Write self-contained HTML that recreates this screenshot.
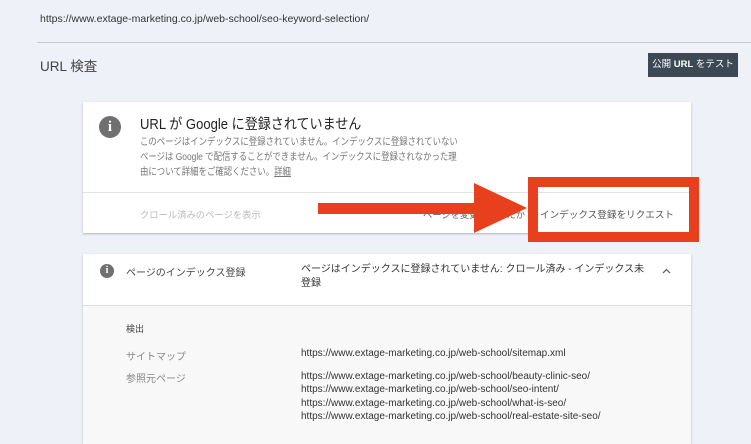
<!DOCTYPE html>
<html><head><meta charset="utf-8"><style>
*{margin:0;padding:0;box-sizing:border-box}
body{width:751px;height:430px;overflow:hidden;background:#eef1f8;font-family:"Liberation Sans","Noto Sans CJK JP",sans-serif;position:relative;color:#333}
.a{position:absolute;white-space:nowrap}
.card{position:absolute;background:#fff;box-shadow:0 1px 2px rgba(0,0,0,.25)}
.ic{position:absolute;border-radius:50%;background:#707070;color:#fff;font-weight:bold;text-align:center;font-family:"Liberation Serif",serif}
.sx{transform-origin:0 0}
</style></head><body>
<div class="a" style="left:40px;top:13px;font-size:10.5px;color:#333">https://www.extage-marketing.co.jp/web-school/seo-keyword-selection/</div>
<div class="a" style="left:37px;top:42px;width:714px;height:1px;background:#c6cad2"></div>
<div class="a" style="left:40px;top:55px;font-size:13.5px;color:#444">URL 検査</div>
<div class="a" style="left:648px;top:53px;width:90px;height:24px;background:#3c4853;color:#fff;font-size:9.5px;line-height:24px;text-align:center">公開 <b>URL</b> をテスト</div>

<div class="card" style="left:83px;top:102px;width:608px;height:131px">
 <div class="ic" style="left:16px;top:14px;width:22px;height:22px;font-size:15px;line-height:22px">i</div>
 <div class="a sx" style="left:57px;top:11px;font-size:14.5px;color:#222;transform:scaleX(0.9)">URL が <b style="font-weight:500">Google</b> に登録されていません</div>
 <div class="a sx" style="left:57px;top:33px;font-size:10px;line-height:15px;color:#777;transform:scaleX(0.84)">このページはインデックスに登録されていません。インデックスに登録されていない<br>ページは Google で配信することができません。インデックスに登録されなかった理<br>由について詳細をご確認ください。<u>詳細</u></div>
 <div class="a" style="left:0;top:90px;width:608px;height:1px;background:#e2e2e2"></div>
 <div class="a" style="left:57px;top:105px;font-size:9.3px;color:#bbb">クロール済みのページを表示</div>
 <div class="a" style="left:340px;top:105px;font-size:9.3px;color:#666">ページを変更しましたか？</div>
 <div class="a" style="left:457px;top:105px;font-size:9.6px;color:#555">インデックス登録をリクエスト</div>
</div>
<div class="a" style="left:528px;top:177px;width:171px;height:65px;border:10px solid #e8401c"></div>
<div class="a" style="left:318px;top:203px;width:160px;height:11px;background:#e8401c"></div>
<svg class="a" style="left:474px;top:183px" width="54" height="50"><polygon points="0,0 53,25 0,50" fill="#e8401c"/></svg>

<div class="card" style="left:83px;top:254px;width:608px;height:190px;background:#f8f8f8">
 <div class="a" style="left:0;top:0;width:608px;height:52px;background:#fff;border-bottom:1px solid #dcdcdc"></div>
 <div class="ic" style="left:17px;top:10px;width:14px;height:14px;font-size:10px;line-height:14px">i</div>
 <div class="a" style="left:43px;top:10px;font-size:10px;color:#444">ページのインデックス登録</div>
 <div class="a" style="left:218px;top:9px;font-size:10px;line-height:14px;color:#333">ページはインデックスに登録されていません: クロール済み - インデックス未<br>登録</div>
 <svg class="a" style="left:579px;top:14px" width="9" height="6"><path d="M1 5 L4.5 1.5 L8 5" fill="none" stroke="#666" stroke-width="1.3"/></svg>
 <div class="a" style="left:43px;top:68px;font-size:9px;color:#444">検出</div>
 <div class="a" style="left:43px;top:94px;font-size:10px;color:#888">サイトマップ</div>
 <div class="a" style="left:218px;top:94px;font-size:10px;color:#333">https://www.extage-marketing.co.jp/web-school/sitemap.xml</div>
 <div class="a" style="left:43px;top:116px;font-size:10px;color:#888">参照元ページ</div>
 <div class="a" style="left:218px;top:116px;font-size:10px;line-height:13.3px;color:#333">https://www.extage-marketing.co.jp/web-school/beauty-clinic-seo/<br>https://www.extage-marketing.co.jp/web-school/seo-intent/<br>https://www.extage-marketing.co.jp/web-school/what-is-seo/<br>https://www.extage-marketing.co.jp/web-school/real-estate-site-seo/</div>
</div>
</body></html>
